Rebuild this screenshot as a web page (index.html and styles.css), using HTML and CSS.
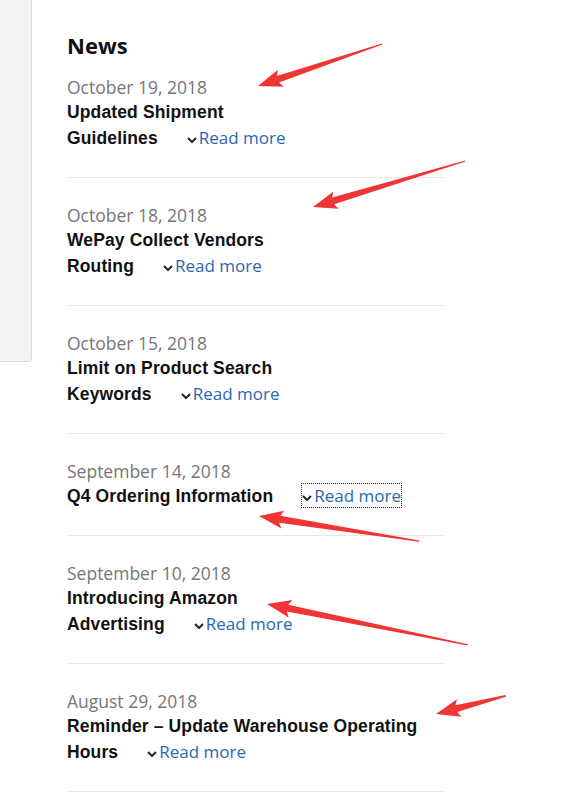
FILE: index.html
```html
<!DOCTYPE html>
<html lang="en">
<head>
    <meta charset="UTF-8">
    <meta name="viewport" content="width=device-width, initial-scale=1.0">
    <title>News</title>
    <link rel="stylesheet" href="styles.css">
</head>
<body>

    <div id="page">
        <div id="sidebar"></div>

        <div id="news">
            <h2>News</h2>

            <div class="news-item">
                <div class="date">October 19, 2018</div>
                <div class="title">Updated Shipment<br>Guidelines<a class="read-more" href="#"><svg class="chev" viewBox="0 0 10 6"><path d="M1 1l4 4 4-4"/></svg>Read more</a></div>
            </div>

            <div class="news-item">
                <div class="date">October 18, 2018</div>
                <div class="title">WePay Collect Vendors<br>Routing<a class="read-more" href="#"><svg class="chev" viewBox="0 0 10 6"><path d="M1 1l4 4 4-4"/></svg>Read more</a></div>
            </div>

            <div class="news-item">
                <div class="date">October 15, 2018</div>
                <div class="title">Limit on Product Search<br>Keywords<a class="read-more" href="#"><svg class="chev" viewBox="0 0 10 6"><path d="M1 1l4 4 4-4"/></svg>Read more</a></div>
            </div>

            <div class="news-item">
                <div class="date">September 14, 2018</div>
                <div class="title">Q4 Ordering Information<a class="read-more focused" href="#"><svg class="chev" viewBox="0 0 10 6"><path d="M1 1l4 4 4-4"/></svg>Read more</a></div>
            </div>

            <div class="news-item">
                <div class="date">September 10, 2018</div>
                <div class="title">Introducing Amazon<br>Advertising<a class="read-more" href="#"><svg class="chev" viewBox="0 0 10 6"><path d="M1 1l4 4 4-4"/></svg>Read more</a></div>
            </div>

            <div class="news-item">
                <div class="date">August 29, 2018</div>
                <div class="title">Reminder – Update Warehouse Operating<br>Hours<a class="read-more" href="#"><svg class="chev" viewBox="0 0 10 6"><path d="M1 1l4 4 4-4"/></svg>Read more</a></div>
            </div>
        </div>
    </div>

    <!-- red annotation arrows drawn over the screenshot -->
    <svg id="arrows" width="573" height="810" viewBox="0 0 573 810">
        <g fill="#ef3535">
            <polygon transform="translate(258 86) rotate(-18.7)" points="0,0 24,-9 21,-3.5 131,-0.6 131,0.6 21,3.5 24,9"/>
            <polygon transform="translate(313 207) rotate(-16.8)" points="0,0 24,-9 21,-3.5 159,-0.6 159,0.6 21,3.5 24,9"/>
            <polygon transform="translate(259 516) rotate(8.9)" points="0,0 24,-9 21,-3.5 162,-0.6 162,0.6 21,3.5 24,9"/>
            <polygon transform="translate(267 604) rotate(11.5)" points="0,0 24,-9 21,-3.5 205,-0.6 205,0.6 21,3.5 24,9"/>
            <polygon transform="translate(436 714) rotate(-14.6)" points="0,0 24,-9 21,-3.5 72,-0.8 72,0.8 21,3.5 24,9"/>
        </g>
    </svg>

</body>
</html>
```

FILE: styles.css
```css
body {
    margin: 0;
    background: #fff;
    font-family: "Open Sans", Arial, sans-serif;
    color: #111;
}
#page {
    display: flex;
    align-items: flex-start;
}
#sidebar {
    width: 32px;
    height: 362px;
    box-sizing: border-box;
    background: #f3f3f3;
    border-right: 1px solid #dcdcdc;
    border-bottom: 1px solid #dcdcdc;
    border-bottom-right-radius: 4px;
}
#news {
    margin-left: 35px;
    width: 378px;
    padding-top: 31px;
}
#news h2 {
    margin: 0 0 16px;
    font-size: 22px;
    line-height: 28px;
    font-weight: 700;
    color: #0f0f0f;
}
.news-item {
    padding: 0 0 26px;
    border-bottom: 1px solid #e7e7e7;
    margin-bottom: 25px;
}
.date {
    font-size: 17.5px;
    line-height: 24px;
    color: #767676;
}
.title {
    font-family: "Liberation Sans", Arial, sans-serif;
    font-weight: 700;
    font-size: 17.5px;
    line-height: 26px;
    letter-spacing: 0.13px;
    color: #111;
}
.read-more {
    font-family: "Open Sans", Arial, sans-serif;
    font-weight: 400;
    font-size: 17px;
    letter-spacing: 0;
    color: #2b67b0;
    text-decoration: none;
    margin-left: 29px;
}
.read-more.focused {
    outline: 1px dotted #1b2a3a;
    outline-offset: 0;
}
.chev {
    width: 10px;
    height: 6px;
    margin-right: 2px;
    vertical-align: 1px;
    fill: none;
    stroke: #222;
    stroke-width: 2;
}
#arrows {
    position: absolute;
    top: 0;
    left: 0;
    pointer-events: none;
}
```
